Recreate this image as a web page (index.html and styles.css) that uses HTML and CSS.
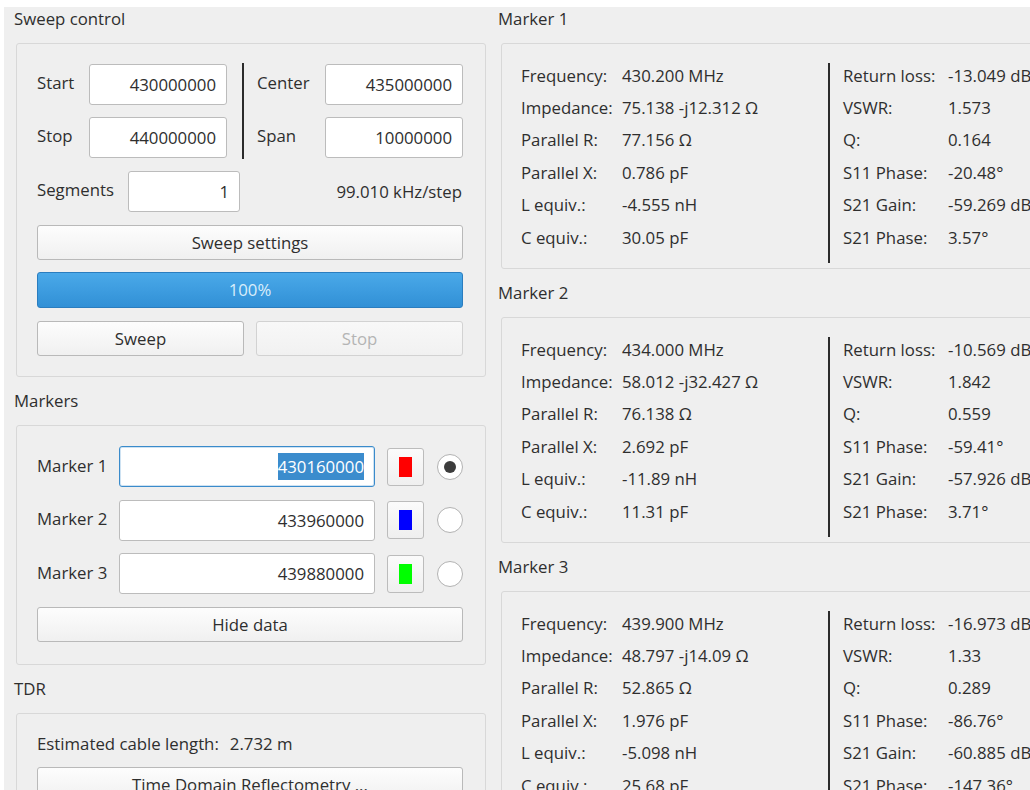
FILE: index.html
```html
<!DOCTYPE html>
<html lang="en">
<head>
<meta charset="utf-8">
<title>NanoVNA Saver</title>
<link rel="stylesheet" href="styles.css">
</head>
<body>
<div class="app">
  <div class="col col-left">
    <section class="group">
      <h2 class="group-title">Sweep control</h2>
      <div class="group-box sweep-box">
        <div class="range">
          <div class="pairs pairs-a">
            <span class="lbl">Start</span><div class="field">430000000</div>
            <span class="lbl">Stop</span><div class="field">440000000</div>
          </div>
          <div class="vsep"></div>
          <div class="pairs pairs-b">
            <span class="lbl">Center</span><div class="field">435000000</div>
            <span class="lbl">Span</span><div class="field">10000000</div>
          </div>
        </div>
        <div class="seg-row">
          <span class="lbl seg-lbl">Segments</span>
          <div class="field seg-field">1</div>
          <span class="step">99.010 kHz/step</span>
        </div>
        <button class="btn">Sweep settings</button>
        <div class="progress">100%</div>
        <div class="btn-pair">
          <button class="btn">Sweep</button>
          <button class="btn" disabled>Stop</button>
        </div>
      </div>
    </section>

    <section class="group">
      <h2 class="group-title">Markers</h2>
      <div class="group-box markers-box">
        <div class="marker-row">
          <span class="lbl mk-lbl">Marker 1</span>
          <div class="field mk-field focused"><span class="sel">430160000</span></div>
          <div class="swatch-btn"><span class="swatch red"></span></div>
          <span class="radio checked"></span>
        </div>
        <div class="marker-row">
          <span class="lbl mk-lbl">Marker 2</span>
          <div class="field mk-field">433960000</div>
          <div class="swatch-btn"><span class="swatch blue"></span></div>
          <span class="radio"></span>
        </div>
        <div class="marker-row">
          <span class="lbl mk-lbl">Marker 3</span>
          <div class="field mk-field">439880000</div>
          <div class="swatch-btn"><span class="swatch green"></span></div>
          <span class="radio"></span>
        </div>
        <button class="btn hide-btn">Hide data</button>
      </div>
    </section>

    <section class="group">
      <h2 class="group-title">TDR</h2>
      <div class="group-box tdr-box">
        <div class="tdr-line"><span>Estimated cable length:</span><span class="tdr-val">2.732 m</span></div>
        <button class="btn">Time Domain Reflectometry ...</button>
      </div>
    </section>
  </div>

  <div class="col col-right">
    <section class="group">
      <h2 class="group-title">Marker 1</h2>
      <div class="group-box data-box">
        <div class="kv kv-a">
          <span>Frequency:</span><span>430.200 MHz</span>
          <span>Impedance:</span><span>75.138 -j12.312 Ω</span>
          <span>Parallel R:</span><span>77.156 Ω</span>
          <span>Parallel X:</span><span>0.786 pF</span>
          <span>L equiv.:</span><span>-4.555 nH</span>
          <span>C equiv.:</span><span>30.05 pF</span>
        </div>
        <div class="vsep data-sep"></div>
        <div class="kv kv-b">
          <span>Return loss:</span><span>-13.049 dB</span>
          <span>VSWR:</span><span>1.573</span>
          <span>Q:</span><span>0.164</span>
          <span>S11 Phase:</span><span>-20.48°</span>
          <span>S21 Gain:</span><span>-59.269 dB</span>
          <span>S21 Phase:</span><span>3.57°</span>
        </div>
      </div>
    </section>

    <section class="group">
      <h2 class="group-title">Marker 2</h2>
      <div class="group-box data-box">
        <div class="kv kv-a">
          <span>Frequency:</span><span>434.000 MHz</span>
          <span>Impedance:</span><span>58.012 -j32.427 Ω</span>
          <span>Parallel R:</span><span>76.138 Ω</span>
          <span>Parallel X:</span><span>2.692 pF</span>
          <span>L equiv.:</span><span>-11.89 nH</span>
          <span>C equiv.:</span><span>11.31 pF</span>
        </div>
        <div class="vsep data-sep"></div>
        <div class="kv kv-b">
          <span>Return loss:</span><span>-10.569 dB</span>
          <span>VSWR:</span><span>1.842</span>
          <span>Q:</span><span>0.559</span>
          <span>S11 Phase:</span><span>-59.41°</span>
          <span>S21 Gain:</span><span>-57.926 dB</span>
          <span>S21 Phase:</span><span>3.71°</span>
        </div>
      </div>
    </section>

    <section class="group">
      <h2 class="group-title">Marker 3</h2>
      <div class="group-box data-box">
        <div class="kv kv-a">
          <span>Frequency:</span><span>439.900 MHz</span>
          <span>Impedance:</span><span>48.797 -j14.09 Ω</span>
          <span>Parallel R:</span><span>52.865 Ω</span>
          <span>Parallel X:</span><span>1.976 pF</span>
          <span>L equiv.:</span><span>-5.098 nH</span>
          <span>C equiv.:</span><span>25.68 pF</span>
        </div>
        <div class="vsep data-sep"></div>
        <div class="kv kv-b">
          <span>Return loss:</span><span>-16.973 dB</span>
          <span>VSWR:</span><span>1.33</span>
          <span>Q:</span><span>0.289</span>
          <span>S11 Phase:</span><span>-86.76°</span>
          <span>S21 Gain:</span><span>-60.885 dB</span>
          <span>S21 Phase:</span><span>-147.36°</span>
        </div>
      </div>
    </section>
  </div>
</div>
</body>
</html>
```

FILE: styles.css
```css
html, body {
  margin: 0;
  padding: 0;
  background: #ffffff;
}

body {
  font-family: "Open Sans", "Noto Sans", sans-serif;
  font-size: 16.8px;
  color: #2e2e2e;
}

.app {
  margin: 7px 0 0 4px;
  height: 783px;
  background: #efefef;
  display: flex;
  overflow: hidden;
}

.col {
  flex: none;
  box-sizing: border-box;
}

.col-left {
  width: 488px;
  padding: 0 6px 0 12px;
}

.col-right {
  width: 600px;
  padding-left: 9px;
}

/* group boxes */
.group + .group {
  margin-top: 12px;
}

.group-title {
  margin: 0 0 12px -2px;
  height: 24px;
  line-height: 24px;
  font-size: inherit;
  font-weight: normal;
}

.col-right .group-title {
  margin-left: -3px;
}

.group-box {
  border: 1px solid #d8d8d8;
  border-radius: 3px;
  box-sizing: border-box;
}

.lbl {
  white-space: nowrap;
}

/* line edits */
.field {
  height: 41px;
  box-sizing: border-box;
  background: #ffffff;
  border: 1px solid #bcbcbc;
  border-radius: 3px;
  text-align: right;
  padding-right: 10px;
  line-height: 39px;
  white-space: nowrap;
}

.field.focused {
  border-color: #3a8bcb;
  box-shadow: inset 0 0 0 1px rgba(58, 139, 203, 0.25);
}

.sel {
  background: #3b8ccd;
  color: #ffffff;
  padding: 2px 0;
}

/* push buttons */
.btn {
  display: block;
  width: 100%;
  height: 35px;
  margin: 0;
  padding: 0;
  font: inherit;
  color: #2e2e2e;
  background: linear-gradient(#fdfdfd, #f0f0f0);
  border: 1px solid #b9b9b9;
  border-radius: 3px;
  box-sizing: border-box;
  text-align: center;
}

.btn:disabled {
  color: #b4b4b4;
  border-color: #d2d2d2;
  background: linear-gradient(#f8f8f8, #f1f1f1);
}

/* sweep control */
.sweep-box {
  width: 470px;
  padding: 20px 22px 20px 20px;
  display: flex;
  flex-direction: column;
}

.range {
  display: flex;
  align-items: stretch;
}

.pairs {
  display: grid;
  row-gap: 12px;
  align-items: center;
}

.pairs .lbl {
  padding-bottom: 4px;
}

.pairs-a {
  grid-template-columns: 52px 138px;
}

.pairs-b {
  flex: 1;
  grid-template-columns: 68px 1fr;
}

.vsep {
  width: 2px;
  background: #2b2b2b;
  flex: none;
}

.range .vsep {
  margin: -1px 13px -1px 15px;
}

.seg-row {
  margin-top: 13px;
  display: flex;
  align-items: center;
}

.seg-lbl {
  width: 91px;
  padding-bottom: 4px;
}

.seg-field {
  width: 112px;
}

.step {
  margin-left: auto;
  padding-right: 1px;
}

.sweep-box > .btn {
  margin-top: 13px;
}

.progress {
  margin-top: 12px;
  height: 36px;
  box-sizing: border-box;
  border: 1px solid #2a7dbf;
  border-radius: 3px;
  background: linear-gradient(#4aa9e9, #3190d6);
  color: #d9edfa;
  text-align: center;
  line-height: 34px;
}

.btn-pair {
  margin-top: 13px;
  display: flex;
  gap: 12px;
}

.btn-pair .btn {
  flex: 1;
}

/* markers */
.markers-box {
  width: 470px;
  padding: 20px 22px 22px 20px;
  display: flex;
  flex-direction: column;
  gap: 12.5px;
}

.marker-row {
  display: flex;
  align-items: center;
}

.mk-lbl {
  width: 82px;
  padding-bottom: 3px;
}

.mk-field {
  width: 256px;
}

.swatch-btn {
  margin-left: 12px;
  width: 37px;
  height: 38px;
  box-sizing: border-box;
  border: 1px solid #bcbcbc;
  border-radius: 3px;
  background: linear-gradient(#fbfbfb, #efefef);
  display: flex;
  align-items: center;
  justify-content: center;
}

.swatch {
  width: 13px;
  height: 20px;
}

.swatch.red { background: #ff0000; }
.swatch.blue { background: #0000ff; }
.swatch.green { background: #00ff00; }

.radio {
  margin-left: 13px;
  width: 26px;
  height: 26px;
  box-sizing: border-box;
  border: 1px solid #b2b2b2;
  border-radius: 50%;
  background: #ffffff;
  display: flex;
  align-items: center;
  justify-content: center;
}

.radio.checked::after {
  content: "";
  width: 12px;
  height: 12px;
  border-radius: 50%;
  background: #3c3c3c;
}

.hide-btn {
  margin-top: 0.5px;
}

/* tdr */
.tdr-box {
  width: 470px;
  height: 120px;
  padding: 18px 22px 0 20px;
}

.tdr-line {
  height: 24px;
  line-height: 24px;
  display: flex;
  gap: 11px;
  margin-bottom: 11px;
}

/* marker data */
.data-box {
  width: 580px;
  height: 226px;
  padding: 15px 0 0 19px;
  display: flex;
}

.kv {
  display: grid;
  grid-auto-rows: 32.4px;
  align-items: center;
  white-space: nowrap;
}

.kv-a {
  width: 307px;
  grid-template-columns: 101px 1fr;
}

.kv-b {
  grid-template-columns: 105px 1fr;
}

.data-sep {
  margin: 4px 13px 5px 0;
}
```
